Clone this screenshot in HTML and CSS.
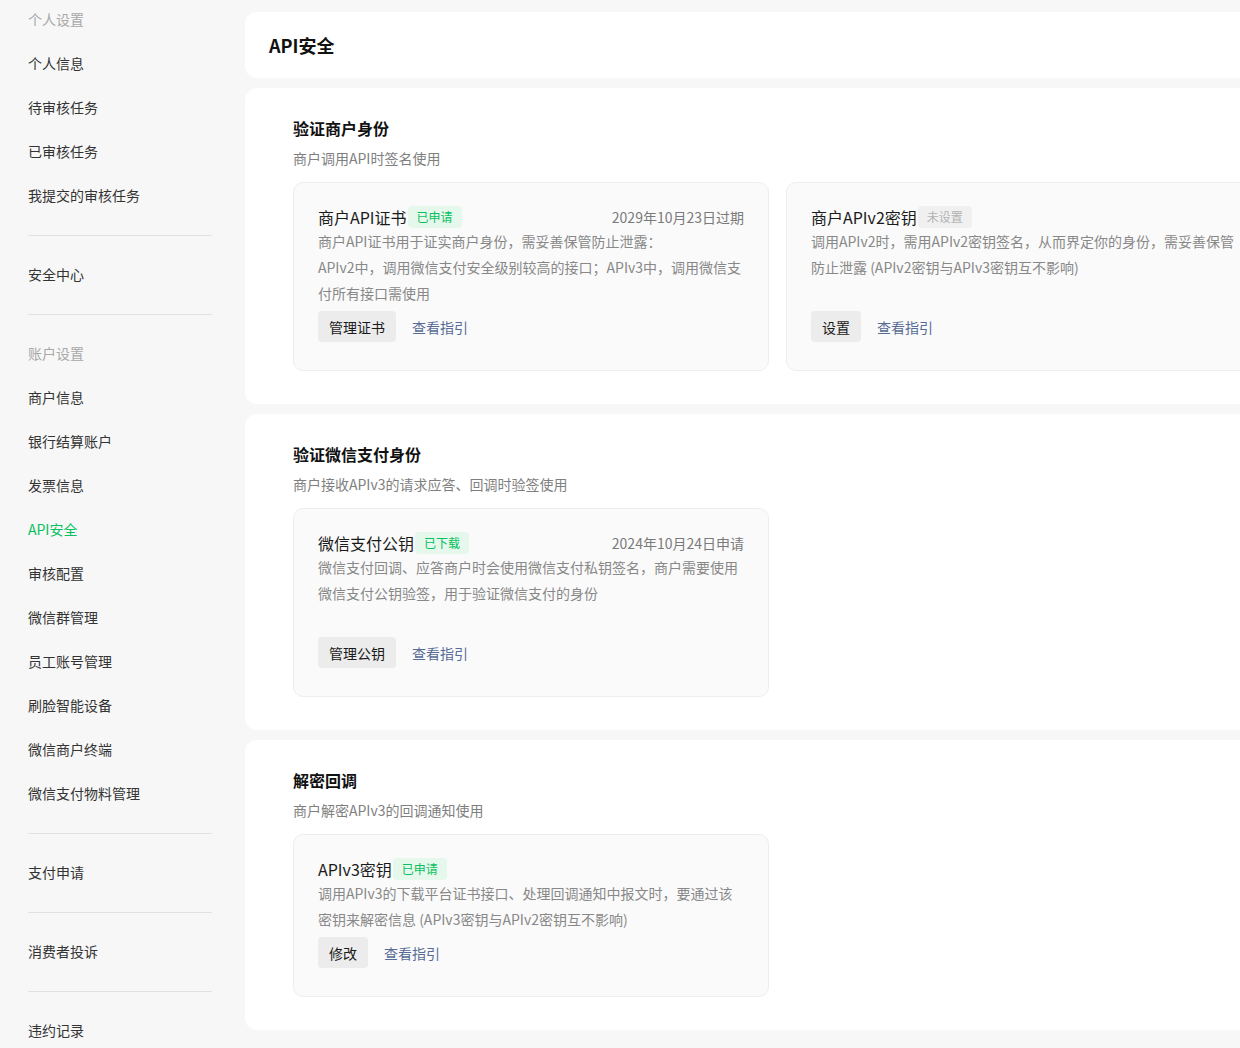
FILE: index.html
```html
<!DOCTYPE html>
<html lang="zh-CN">
<head>
<meta charset="utf-8">
<title>API安全</title>
<link rel="stylesheet" href="styles.css">
</head>
<body>
<div class="page">
  <nav class="sidebar">
    <div class="nav-label">个人设置</div>
    <a class="nav-item">个人信息</a>
    <a class="nav-item">待审核任务</a>
    <a class="nav-item">已审核任务</a>
    <a class="nav-item">我提交的审核任务</a>
    <div class="nav-divider"></div>
    <a class="nav-item">安全中心</a>
    <div class="nav-divider"></div>
    <div class="nav-label">账户设置</div>
    <a class="nav-item">商户信息</a>
    <a class="nav-item">银行结算账户</a>
    <a class="nav-item">发票信息</a>
    <a class="nav-item nav-item--active">API安全</a>
    <a class="nav-item">审核配置</a>
    <a class="nav-item">微信群管理</a>
    <a class="nav-item">员工账号管理</a>
    <a class="nav-item">刷脸智能设备</a>
    <a class="nav-item">微信商户终端</a>
    <a class="nav-item">微信支付物料管理</a>
    <div class="nav-divider"></div>
    <a class="nav-item">支付申请</a>
    <div class="nav-divider"></div>
    <a class="nav-item">消费者投诉</a>
    <div class="nav-divider"></div>
    <a class="nav-item">违约记录</a>
  </nav>

  <main class="main">
    <header class="page-head">
      <h1 class="page-title">API安全</h1>
    </header>

    <section class="panel">
      <h2 class="panel-title">验证商户身份</h2>
      <p class="panel-sub">商户调用API时签名使用</p>
      <div class="card-grid">
        <div class="card">
          <div class="card-head">
            <span class="card-title">商户API证书</span>
            <span class="tag tag--green">已申请</span>
            <span class="card-date">2029年10月23日过期</span>
          </div>
          <p class="card-desc card-desc--tall">商户API证书用于证实商户身份，需妥善保管防止泄露：<br>APIv2中，调用微信支付安全级别较高的接口；APIv3中，调用微信支<br>付所有接口需使用</p>
          <div class="card-actions">
            <button class="btn">管理证书</button>
            <a class="link">查看指引</a>
          </div>
        </div>
        <div class="card">
          <div class="card-head">
            <span class="card-title">商户APIv2密钥</span>
            <span class="tag tag--grey">未设置</span>
          </div>
          <p class="card-desc card-desc--tall">调用APIv2时，需用APIv2密钥签名，从而界定你的身份，需妥善保管<br>防止泄露 (APIv2密钥与APIv3密钥互不影响)</p>
          <div class="card-actions">
            <button class="btn">设置</button>
            <a class="link">查看指引</a>
          </div>
        </div>
      </div>
    </section>

    <section class="panel">
      <h2 class="panel-title">验证微信支付身份</h2>
      <p class="panel-sub">商户接收APIv3的请求应答、回调时验签使用</p>
      <div class="card-grid">
        <div class="card">
          <div class="card-head">
            <span class="card-title">微信支付公钥</span>
            <span class="tag tag--green">已下载</span>
            <span class="card-date">2024年10月24日申请</span>
          </div>
          <p class="card-desc card-desc--tall">微信支付回调、应答商户时会使用微信支付私钥签名，商户需要使用<br>微信支付公钥验签，用于验证微信支付的身份</p>
          <div class="card-actions">
            <button class="btn">管理公钥</button>
            <a class="link">查看指引</a>
          </div>
        </div>
      </div>
    </section>

    <section class="panel">
      <h2 class="panel-title">解密回调</h2>
      <p class="panel-sub">商户解密APIv3的回调通知使用</p>
      <div class="card-grid">
        <div class="card">
          <div class="card-head">
            <span class="card-title">APIv3密钥</span>
            <span class="tag tag--green">已申请</span>
          </div>
          <p class="card-desc">调用APIv3的下载平台证书接口、处理回调通知中报文时，要通过该<br>密钥来解密信息 (APIv3密钥与APIv2密钥互不影响)</p>
          <div class="card-actions">
            <button class="btn">修改</button>
            <a class="link">查看指引</a>
          </div>
        </div>
      </div>
    </section>
  </main>
</div>
</body>
</html>
```

FILE: styles.css
```css
* {
  box-sizing: border-box;
}

html,
body {
  margin: 0;
  padding: 0;
  overflow: hidden;
  background: #f7f7f7;
}

body {
  font-family: "Noto Sans CJK SC", "Noto Sans", sans-serif;
  font-size: 14px;
  color: #1a1a1a;
}

.page {
  display: flex;
  align-items: flex-start;
  width: 1400px;
}

/* Sidebar */
.sidebar {
  flex: none;
  width: 245px;
  padding: 0 33px 0 28px;
  margin-top: -2px;
  display: flex;
  flex-direction: column;
}

.nav-label,
.nav-item {
  height: 44px;
  line-height: 42px;
  font-size: 14px;
  white-space: nowrap;
}

.nav-label {
  color: #a8a8a8;
}

.nav-item {
  color: #333333;
  text-decoration: none;
  cursor: pointer;
}

.nav-item--active {
  color: #07c160;
}

.nav-divider {
  height: 1px;
  background: #e2e2e2;
  margin: 17px 0;
}

/* Main */
.main {
  flex: none;
  width: 1066px;
  padding-top: 12px;
  display: flex;
  flex-direction: column;
  gap: 10px;
}

.page-head {
  height: 66px;
  background: #ffffff;
  border-radius: 12px;
  padding: 0 24px;
  display: flex;
  align-items: center;
}

.page-title {
  margin: 0;
  font-size: 18px;
  font-weight: 700;
  color: #111111;
}

.panel {
  background: #ffffff;
  border-radius: 12px;
  padding: 28px 48px 33px;
}

.panel-title {
  margin: 0;
  font-size: 16px;
  line-height: 24px;
  font-weight: 700;
  color: #111111;
}

.panel-sub {
  margin: 7px 0 0;
  font-size: 14px;
  line-height: 22px;
  color: #7f7f7f;
}

.card-grid {
  margin-top: 13px;
  display: grid;
  grid-template-columns: 476px 476px;
  gap: 17px;
}

.card {
  background: #fafafa;
  border: 1px solid #eeeeee;
  border-radius: 10px;
  padding: 23px 24px 28px;
}

.card-head {
  display: flex;
  align-items: center;
  height: 22px;
}

.card-title {
  font-size: 16px;
  color: #1a1a1a;
  white-space: nowrap;
}

.tag {
  margin-left: 1px;
  height: 22px;
  line-height: 22px;
  padding: 0 9px;
  border-radius: 4px;
  font-size: 12px;
  white-space: nowrap;
}

.tag--green {
  background: #e6f7ec;
  color: #07c160;
}

.tag--grey {
  background: #f0f0f0;
  color: #b2b2b2;
}

.card-date {
  margin-left: auto;
  font-size: 14px;
  color: #7a7a7a;
  white-space: nowrap;
}

.card-desc {
  margin: 0;
  font-size: 14px;
  line-height: 26px;
  color: #888888;
  white-space: nowrap;
}

.card-desc--tall {
  min-height: 78px;
}

.card-actions {
  margin-top: 5px;
  display: flex;
  align-items: center;
  gap: 16px;
}

.btn {
  height: 31px;
  padding: 0 11px;
  border: none;
  border-radius: 4px;
  background: #ececec;
  font-family: inherit;
  font-size: 14px;
  color: #1a1a1a;
  cursor: pointer;
}

.link {
  font-size: 14px;
  color: #576b95;
  cursor: pointer;
}
```
